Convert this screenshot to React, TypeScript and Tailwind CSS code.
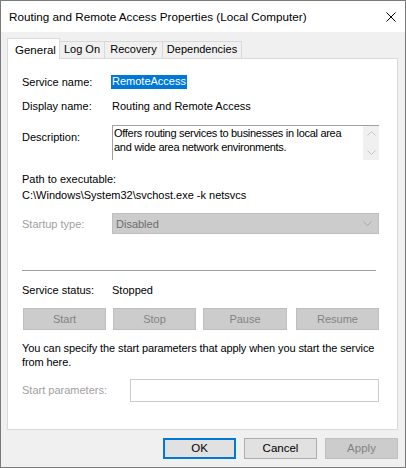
import type { ReactNode } from "react";

const tabs = [
  { label: "General", width: "w-[53px]" },
  { label: "Log On", width: "w-[45px]" },
  { label: "Recovery", width: "w-[58px]" },
  { label: "Dependencies", width: "w-[79px]" },
];

function Row({ label, children, className = "" }: { label: string; children: ReactNode; className?: string }) {
  return (
    <div className={`flex leading-[14px] ${className}`}>
      <span className="w-[90px] shrink-0">{label}</span>
      {children}
    </div>
  );
}

function DisabledButton({ children, className = "" }: { children: ReactNode; className?: string }) {
  return (
    <div
      className={`flex items-center justify-center border border-[#bfbfbf] bg-[#cccccc] text-[#838383] ${className}`}
    >
      {children}
    </div>
  );
}

export default function App() {
  return (
    <div className="flex h-[468px] w-[406px] flex-col border border-[#7a7a7a] bg-[#f0f0f0] font-['Liberation_Sans',Arial,sans-serif] text-[11px] text-black">
      {/* title bar */}
      <div className="flex h-[31px] shrink-0 items-center justify-between bg-white pl-2 pr-[9px]">
        <span className="text-[11.7px]">Routing and Remote Access Properties (Local Computer)</span>
        <svg width="10" height="10" viewBox="0 0 10 10">
          <path d="M0.5 0.5 L9.5 9.5 M9.5 0.5 L0.5 9.5" stroke="#000" strokeWidth="1" />
        </svg>
      </div>

      <div className="flex flex-1 flex-col pl-[6px] pr-[7px] pt-[6px]">
        {/* tab strip */}
        <div className="flex h-[20px] items-end">
          {tabs.map((t, i) =>
            i === 0 ? (
              <div
                key={t.label}
                className={`relative z-10 -mb-px flex h-[21px] items-start border-x border-t border-[#d9d9d9] bg-white pl-[7px] pt-[3px] text-[11.5px] ${t.width}`}
              >
                {t.label}
              </div>
            ) : (
              <div
                key={t.label}
                className={`flex h-[17px] items-center justify-center border-r border-t border-[#d9d9d9] pb-px ${t.width}`}
              >
                {t.label}
              </div>
            ),
          )}
        </div>

        {/* tab page */}
        <div className="flex h-[372px] w-[391px] flex-col border border-[#d9d9d9] bg-white pl-[14px]">
          <Row label="Service name:" className="mt-[16px]">
            <span className="-ml-px bg-[#0078d7] px-px leading-[13px] text-white">RemoteAccess</span>
          </Row>
          <Row label="Display name:" className="mt-[10px]">
            <span>Routing and Remote Access</span>
          </Row>

          <div className="mt-[12px] flex leading-[14px]">
            <span className="mt-[5px] w-[90px] shrink-0">Description:</span>
            <div className="flex h-[35px] w-[267px] border-l border-t border-[#a0a0a0] bg-white">
              <div className="flex-1 pl-px tracking-[-0.3px]">
                Offers routing services to businesses in local area
                <br />
                and wide area network environments.
              </div>
              <div className="flex w-[16px] flex-col items-center justify-between bg-[#f0f0f0] py-[5px]">
                <svg width="9" height="5" viewBox="0 0 9 5">
                  <path d="M0.5 4.5 L4.5 0.5 L8.5 4.5" fill="none" stroke="#c4c4c4" />
                </svg>
                <svg width="9" height="5" viewBox="0 0 9 5">
                  <path d="M0.5 0.5 L4.5 4.5 L8.5 0.5" fill="none" stroke="#c4c4c4" />
                </svg>
              </div>
            </div>
          </div>

          <div className="mt-[12px] leading-[14px]">Path to executable:</div>
          <div className="mt-[2px] leading-[14px]">C:\Windows\System32\svchost.exe -k netsvcs</div>

          <div className="mt-[11px] flex items-center leading-[14px]">
            <span className="w-[90px] shrink-0 text-[#a0a0a0]">Startup type:</span>
            <div className="flex h-[21px] w-[267px] items-center justify-between border border-[#bfbfbf] bg-[#cccccc] pl-[3px] pr-[6px] text-[#6d6d6d]">
              <span>Disabled</span>
              <svg width="9" height="5" viewBox="0 0 9 5">
                <path d="M0.5 0.5 L4.5 4.5 L8.5 0.5" fill="none" stroke="#a8a8a8" />
              </svg>
            </div>
          </div>

          <div className="mt-[36px] h-px w-[354px] bg-[#a0a0a0]" />

          <Row label="Service status:" className="mt-[12px]">
            <span>Stopped</span>
          </Row>

          <div className="mt-[11px] flex gap-[7px] pl-px">
            <DisabledButton className="h-[22px] w-[83px]">Start</DisabledButton>
            <DisabledButton className="h-[22px] w-[83px]">Stop</DisabledButton>
            <DisabledButton className="h-[22px] w-[84px]">Pause</DisabledButton>
            <DisabledButton className="ml-[2px] h-[22px] w-[83px]">Resume</DisabledButton>
          </div>

          <p className="mt-[11px] leading-[14px] tracking-[-0.1px]">
            You can specify the start parameters that apply when you start the service
            <br />
            from here.
          </p>

          <div className="mt-[10px] flex items-center">
            <span className="w-[108px] shrink-0 text-[#a0a0a0]">Start parameters:</span>
            <div className="h-[23px] w-[249px] border border-[#cccccc] bg-white" />
          </div>
        </div>

        {/* dialog buttons */}
        <div className="mt-[8px] flex justify-end gap-[8px] text-[11.5px]">
          <div className="flex h-[21px] w-[73px] items-center justify-center border-2 border-[#0078d7] bg-[#e1e1e1]">
            OK
          </div>
          <div className="flex h-[21px] w-[73px] items-center justify-center border border-[#adadad] bg-[#e1e1e1]">
            Cancel
          </div>
          <DisabledButton className="h-[21px] w-[73px]">Apply</DisabledButton>
        </div>
      </div>
    </div>
  );
}
